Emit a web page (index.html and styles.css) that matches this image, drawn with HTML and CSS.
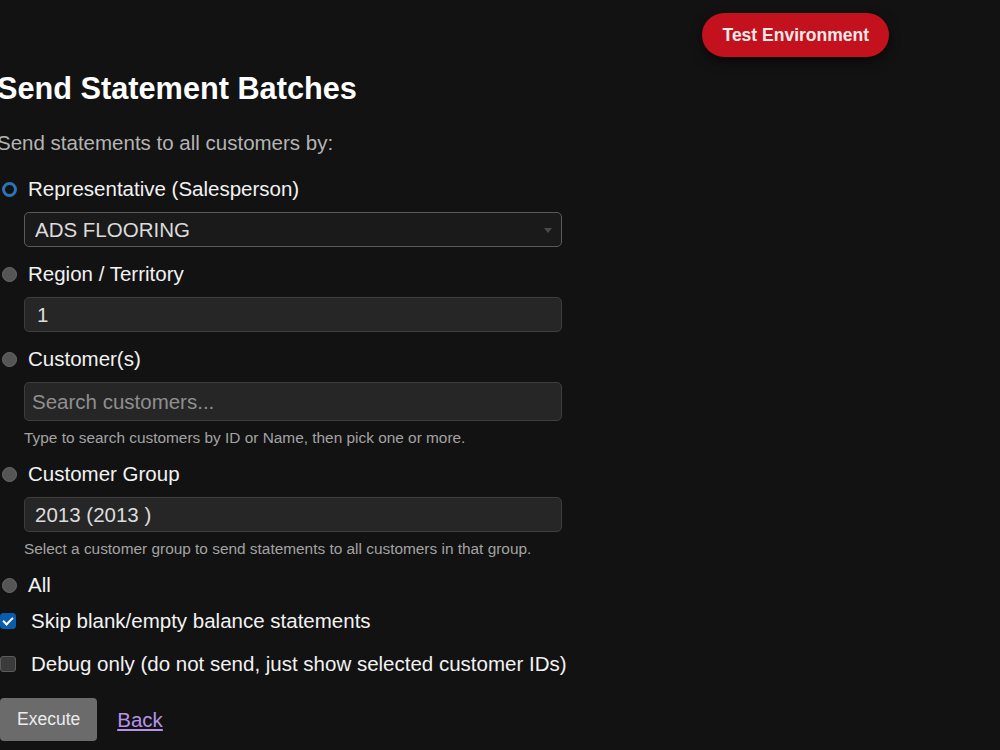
FILE: index.html
```html
<!DOCTYPE html>
<html lang="en">
<head>
    <meta charset="UTF-8" />
    <title>Send Statement Batches</title>
    <link rel="stylesheet" href="styles.css">
</head>
<body>

    <div class="topbar">
        <span class="env-badge">Test Environment</span>
    </div>

    <form id="batchForm" class="page">
        <h2>Send Statement Batches</h2>

        <p class="intro">Send statements to all customers by:</p>

        <label class="option first">
            <input type="radio" name="mode" value="rep" checked />
            <span>Representative (Salesperson)</span>
        </label>
        <div class="select-wrap">
            <select id="repSelect">
                <option>ADS FLOORING</option>
            </select>
        </div>

        <label class="option">
            <input type="radio" name="mode" value="region" />
            <span>Region / Territory</span>
        </label>
        <input type="text" id="region" class="field" value="1" />

        <label class="option">
            <input type="radio" name="mode" value="customers" />
            <span>Customer(s)</span>
        </label>
        <input type="text" id="customerSearch" class="field search" placeholder="Search customers..." />
        <div class="hint">Type to search customers by ID or Name, then pick one or more.</div>

        <label class="option">
            <input type="radio" name="mode" value="group" />
            <span>Customer Group</span>
        </label>
        <input type="text" id="group" class="field group" value="2013 (2013 )" />
        <div class="hint">Select a customer group to send statements to all customers in that group.</div>

        <label class="option">
            <input type="radio" name="mode" value="all" />
            <span>All</span>
        </label>

        <label class="check first-check">
            <input type="checkbox" id="skipBlank" checked />
            <span>Skip blank/empty balance statements</span>
        </label>

        <label class="check">
            <input type="checkbox" id="debugOnly" />
            <span>Debug only (do not send, just show selected customer IDs)</span>
        </label>

        <div class="actions">
            <button type="submit">Execute</button>
            <a href="#" class="back">Back</a>
        </div>
    </form>

</body>
</html>
```

FILE: styles.css
```css
body {
    font-family: "Liberation Sans", Arial, sans-serif;
    margin: 0;
    background-color: #121212;
    color: #f2f2f2;
}

.topbar {
    display: flex;
    justify-content: flex-end;
    padding: 13px 111px 0 0;
}

.env-badge {
    background-color: #c3111e;
    color: #f6e9e9;
    font-weight: bold;
    font-size: 17.5px;
    height: 44px;
    line-height: 44px;
    padding: 0 20px;
    border-radius: 22px;
    box-shadow: 0 4px 12px rgba(0, 0, 0, 0.6);
}

.page {
    margin-left: -3px;
}

h2 {
    font-size: 30.7px;
    line-height: 36px;
    margin: 14px 0 0 0;
    color: #ffffff;
}

.intro {
    font-size: 20.5px;
    line-height: 24px;
    color: #b4b4b4;
    margin: 24px 0 0 0;
}

.option, .check {
    display: flex;
    align-items: center;
    font-size: 20.5px;
    line-height: 24px;
    height: 24px;
    margin-top: 15px;
}

    .option.first {
        margin-top: 22px;
    }

    .option input {
        appearance: none;
        width: 15px;
        height: 15px;
        margin: 0 11px 0 5px;
        border-radius: 50%;
        background-color: #555;
        border: 1px solid #6a6a6a;
        box-sizing: border-box;
    }

        .option input:checked {
            background-color: #121212;
            border: 3px solid #2d73b8;
        }

    .check input {
        appearance: none;
        width: 16px;
        height: 16px;
        margin: 0 15px 0 3px;
        border-radius: 3px;
        background-color: #3b3b3b;
        border: 1px solid #5c5c5c;
        box-sizing: border-box;
        position: relative;
    }

        .check input:checked {
            background-color: #0b5cad;
            border-color: #0b5cad;
        }

            .check input:checked::after {
                content: "";
                position: absolute;
                left: 4px;
                top: 1px;
                width: 4px;
                height: 8px;
                border: solid #fff;
                border-width: 0 2px 2px 0;
                transform: rotate(45deg);
            }

.first-check {
    margin-top: 12px;
}

.check + .check {
    margin-top: 19px;
}

.select-wrap {
    position: relative;
    margin: 11px 0 0 27px;
    width: 538px;
}

    .select-wrap::after {
        content: "";
        position: absolute;
        right: 10px;
        top: 16px;
        border-left: 4px solid transparent;
        border-right: 4px solid transparent;
        border-top: 5px solid #4a4a4a;
    }

select, .field {
    display: block;
    box-sizing: border-box;
    width: 538px;
    height: 35px;
    font-family: "Liberation Sans", Arial, sans-serif;
    font-size: 20.5px;
    color: #dcdcdc;
    border-radius: 5px;
    outline: none;
}

select {
    appearance: none;
    background-color: #1a1a1a;
    border: 1px solid #5a5a5a;
    padding: 0 10px;
}

.field {
    margin: 11px 0 0 27px;
    background-color: #262626;
    border: 1px solid #3d3d3d;
    padding: 0 12px;
}

    .field.group {
        padding: 0 10px;
    }

    .field.search {
        height: 39px;
        padding: 0 7px;
    }

        .field.search::placeholder {
            color: #8f8f8f;
        }

.hint {
    font-size: 15.4px;
    line-height: 18px;
    color: #a3a3a3;
    margin: 8px 0 0 27px;
}

.actions {
    display: flex;
    align-items: center;
    margin: 22px 0 0 3px;
}

button {
    background-color: #6b6b6b;
    color: #ececec;
    font-family: "Liberation Sans", Arial, sans-serif;
    font-size: 17.5px;
    height: 43px;
    padding: 0 17px;
    border: none;
    border-radius: 4px;
    cursor: pointer;
}

.back {
    margin-left: 20px;
    font-size: 20.5px;
    color: #b692e8;
}
```
